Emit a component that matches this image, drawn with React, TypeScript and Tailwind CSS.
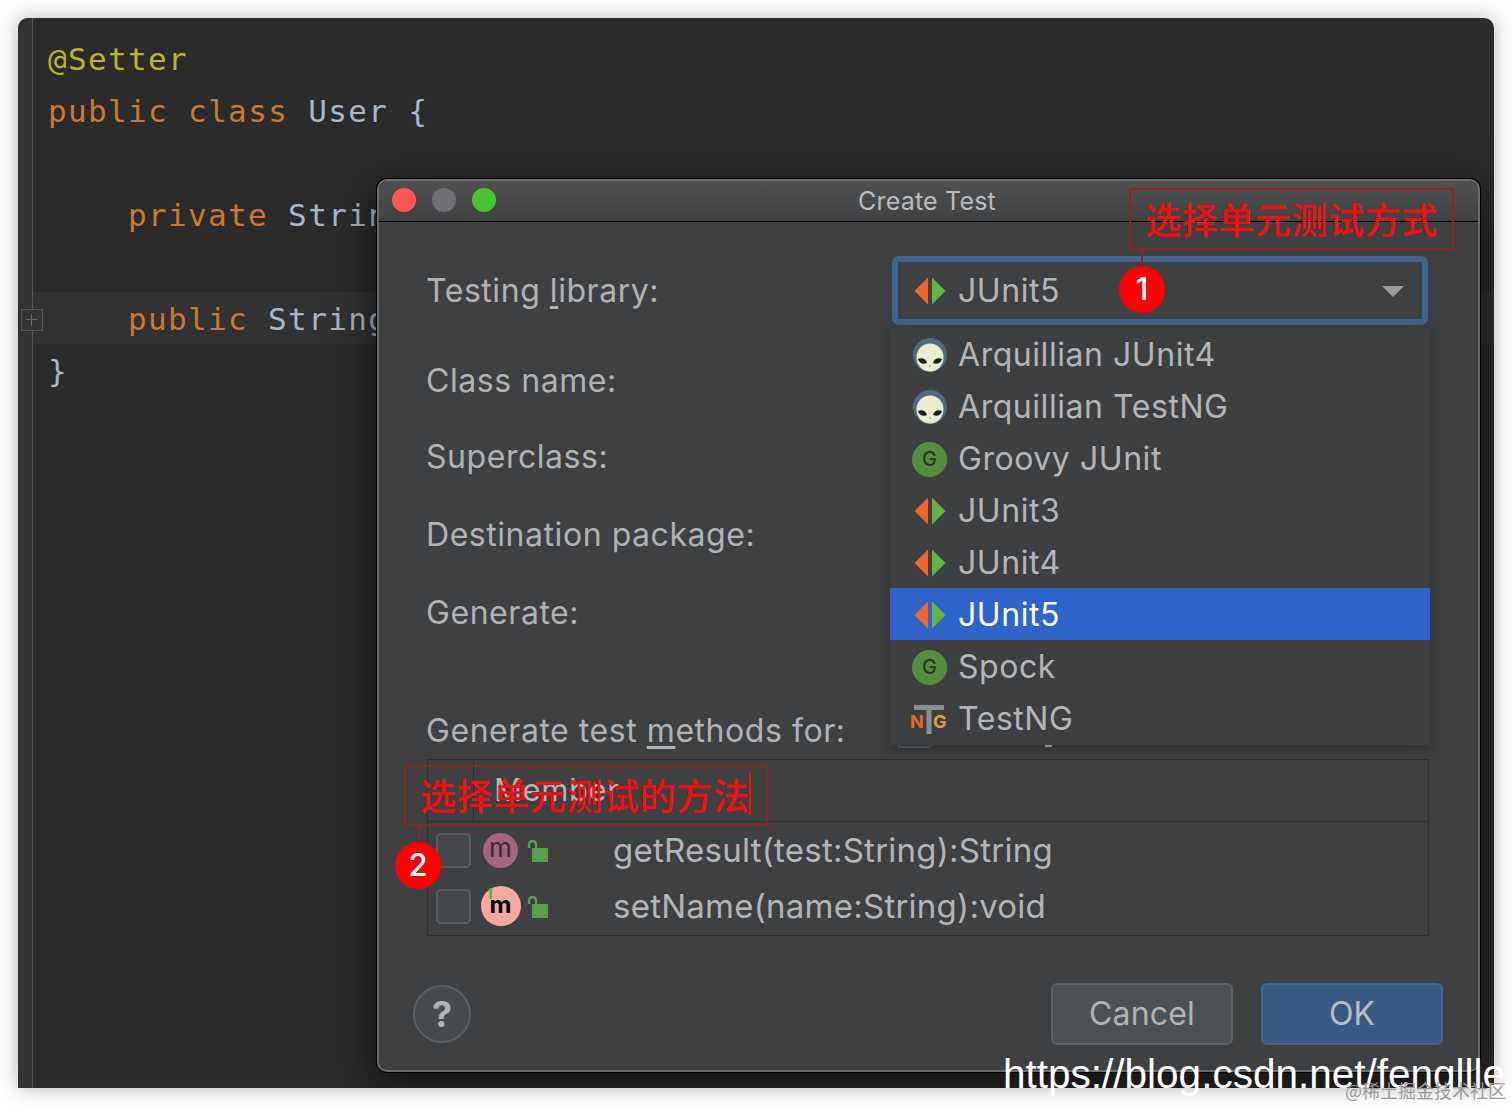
const ui = "font-['Inter','Noto_Sans',sans-serif]";
const cjk = "font-['Noto_Sans_CJK_SC',sans-serif]";

function JUnitIcon() {
  return (
    <svg width="32" height="28" viewBox="0 0 32 28" className="shrink-0">
      <path d="M14 0.5V27.5L0.5 14Z" fill="#ec6727" />
      <path d="M18 0.5V27.5L31.5 14Z" fill="#62b540" />
    </svg>
  );
}

function AlienIcon() {
  return (
    <svg width="34" height="36" viewBox="0 0 34 36" className="shrink-0">
      <circle cx="17" cy="18" r="17" fill="#4f6a7e" />
      <ellipse cx="17" cy="20.5" rx="13.5" ry="14" fill="#e9edd0" />
      <path d="M5 22C9 20 13 22 14 26C10 28 6 26 5 22Z" fill="#1d1f1d" />
      <path d="M29 22C25 20 21 22 20 26C24 28 28 26 29 22Z" fill="#1d1f1d" />
      <circle cx="17" cy="29" r="0.8" fill="#777" />
    </svg>
  );
}

function GroovyIcon() {
  return (
    <div className={`flex h-[35px] w-[35px] shrink-0 items-center justify-center rounded-full bg-[#568c3d] text-[20px] font-medium text-[#1f3d19] ${ui}`}>
      G
    </div>
  );
}

function TestNgIcon() {
  return (
    <svg width="38" height="32" viewBox="0 0 38 32" className="-ml-0.5 shrink-0">
      <text x="0" y="25" fontFamily="Inter, sans-serif" fontWeight="700" fontSize="18" fill="#e8662a">N</text>
      <text x="23" y="25" fontFamily="Inter, sans-serif" fontWeight="700" fontSize="18" fill="#d9a13b">G</text>
      <path d="M4 2H34V7H21.5V31H16.5V7H4Z" fill="#8a9092" />
    </svg>
  );
}

function LockIcon() {
  return (
    <svg width="22" height="24" viewBox="0 0 22 24" className="shrink-0">
      <path d="M2 9V6C2 3.5 3.5 2 5.5 2C7.5 2 9 3.5 9 5.5V9" fill="none" stroke="#59a14a" strokeWidth="2.4" />
      <rect x="5" y="9" width="16" height="14" fill="#59a14a" />
    </svg>
  );
}

const libraries = [
  { name: "Arquillian JUnit4", icon: <AlienIcon /> },
  { name: "Arquillian TestNG", icon: <AlienIcon /> },
  { name: "Groovy JUnit", icon: <GroovyIcon /> },
  { name: "JUnit3", icon: <JUnitIcon /> },
  { name: "JUnit4", icon: <JUnitIcon /> },
  { name: "JUnit5", icon: <JUnitIcon />, active: true },
  { name: "Spock", icon: <GroovyIcon /> },
  { name: "TestNG", icon: <TestNgIcon /> },
];

function LibraryPopup() {
  return (
    <div className="absolute left-[513px] top-[149px] z-10 w-[540px] bg-[#3e3f41] pb-px shadow-[0_4px_14px_rgba(0,0,0,0.3)]">
      {libraries.map((lib) => (
        <div
          key={lib.name}
          className={`flex h-[52px] items-center pt-0.5 ${lib.active ? "bg-[#2f65ca] text-white" : "text-[#b3b5b7]"}`}
        >
          <div className="flex w-[68px] shrink-0 items-center justify-center pl-[11px]">{lib.icon}</div>
          <span className="text-[32px] tracking-[0.55px]">{lib.name}</span>
        </div>
      ))}
    </div>
  );
}

function FormLabel({ children, className }: { children: React.ReactNode; className: string }) {
  return <div className={`flex h-10 items-center text-[32px] tracking-[0.55px] text-[#b0b2b4] ${className}`}>{children}</div>;
}

function MemberRow({ icon, signature }: { icon: React.ReactNode; signature: string }) {
  return (
    <div className="flex h-14 items-center pl-2">
      <div className="h-[35px] w-[35px] shrink-0 rounded-[5px] border-2 border-[#5a5e60] bg-[#43474a]" />
      <div className="flex w-[46px] justify-center pl-[13px]">{icon}</div>
      <div className="ml-2.5 mt-0.5"><LockIcon /></div>
      <span className="ml-[64px] mt-0.5 text-[33px] tracking-[0.25px] text-[#b3b5b7]">{signature}</span>
    </div>
  );
}

function CreateTestDialog() {
  return (
    <div className={`absolute left-[359px] top-[161px] flex h-[893px] w-[1103px] flex-col rounded-[10px] border-2 border-[#6a6c6e] bg-[#3e4042] shadow-[0_0_0_1px_#000,0_14px_50px_rgba(0,0,0,0.65)] ${ui}`}>
      <div className="flex h-[41px] shrink-0 items-center justify-center rounded-t-[9px] border-b border-black bg-gradient-to-b from-[#4f5153] to-[#3f4143] pr-[3px]">
        <div className="absolute left-[13px] top-[7px] flex gap-4">
          <div className="h-6 w-6 rounded-full bg-[#fc5753]" />
          <div className="h-6 w-6 rounded-full bg-[#6f7073]" />
          <div className="h-6 w-6 rounded-full bg-[#48c22e]" />
        </div>
        <span className="pt-0.5 text-[25px] tracking-[0.2px] text-[#b9bbbd]">Create Test</span>
      </div>

      <div className="relative flex flex-1 flex-col pl-[47px]">
        <FormLabel className="mt-[49px]">
          <span>Testing <u className="underline-offset-4">l</u>ibrary:</span>
        </FormLabel>
        <FormLabel className="mt-[50px]">Class name:</FormLabel>
        <FormLabel className="mt-9">Superclass:</FormLabel>
        <FormLabel className="mt-[38px]">Destination package:</FormLabel>
        <FormLabel className="mt-[38px]">Generate:</FormLabel>
        <FormLabel className="mt-[78px]">
          <span>Generate test <u className="underline-offset-4">m</u>ethods for:</span>
        </FormLabel>

        <div className="mr-[49px] ml-px mt-2 h-[177px] border border-[#2e2f30]">
          <div className="flex h-[62px] items-center border-b border-[#2e2f30]">
            <div className="h-full w-[46px] border-r border-[#2e2f30]" />
            <span className="ml-5 text-[31px] tracking-[0.6px] text-[#b3b5b7]">Member</span>
          </div>
          <MemberRow
            signature="getResult(test:String):String"
            icon={
              <div className="flex h-[35px] w-[35px] shrink-0 items-center justify-center rounded-full bg-[#a4667f] pb-1 text-[26px] leading-none text-[#3d2b33]">
                m
              </div>
            }
          />
          <MemberRow
            signature="setName(name:String):void"
            icon={
              <div className="relative flex h-10 w-10 shrink-0 items-center justify-center rounded-full bg-[#f7a9a0] pb-0.5 text-[24px] font-bold leading-none text-black">
                m
                <span className="absolute left-2 top-0 text-[15px] font-bold text-[#4caf3c]">l</span>
              </div>
            }
          />
        </div>

        <div className="mt-[47px] flex items-center justify-between pr-[35px]">
          <div className="ml-[-13px] flex h-[58px] w-[58px] items-center justify-center rounded-full border-2 border-[#5c6062] bg-[#474b4d] text-[36px] font-bold text-[#b0b3b5]">
            ?
          </div>
          <div className="flex gap-7">
            <div className="flex h-[62px] w-[182px] items-center justify-center rounded-[6px] border-2 border-[#5e6264] bg-[#4d5153] text-[32px] tracking-[0.2px] text-[#b0b2b4]">
              Cancel
            </div>
            <div className="flex h-[62px] w-[182px] items-center justify-center rounded-[6px] border-2 border-[#44698f] bg-[#375a82] text-[32px] text-[#b9bec3]">
              OK
            </div>
          </div>
        </div>

        <div className="absolute left-[513px] top-[34px] flex h-[69px] w-[536px] items-center rounded-[7px] border-[6px] border-[#3f6591] bg-[#3e4042] pl-4 pr-[18px]">
          <JUnitIcon />
          <span className="ml-3 text-[32px] tracking-[0.55px] text-[#b3b5b7]">JUnit5</span>
          <div className="ml-auto mt-0.5 h-0 w-0 border-x-[11px] border-t-[11px] border-x-transparent border-t-[#9a9c9e]" />
        </div>

        <div className="absolute left-[518px] top-[522px] h-1 w-[35px] rounded-b-[5px] border-2 border-t-0 border-[#5a5e60]" />
        <div className="absolute left-[666px] top-[522px] h-[3px] w-[7px] bg-[#b0b2b4]" />
      </div>
    </div>
  );
}

function Annotation({ label, number, boxClass, lineClass, badgeClass, cursor }: {
  label: string;
  number: string;
  boxClass: string;
  lineClass: string;
  badgeClass: string;
  cursor?: boolean;
}) {
  return (
    <>
      <div className={`absolute z-20 flex items-center border-2 border-[#8f2326] pb-[3px] pl-[14px] text-[36px] font-medium leading-none text-[#f70d0d] ${cjk} ${boxClass}`}>
        <span className="tracking-[0.6px]">{label}</span>
        {cursor && <div className="h-[42px] w-0.5 bg-[#f70d0d]" />}
      </div>
      <div className={`absolute z-20 w-0.5 bg-[#8f2326] ${lineClass}`} />
      <div className={`absolute z-20 flex h-[47px] w-[46px] items-center justify-center rounded-full bg-[#fe0000] text-[31px] font-medium text-white ${ui} ${badgeClass}`}>
        {number}
      </div>
    </>
  );
}

export default function App() {
  return (
    <div className="relative h-[1106px] w-[1512px] overflow-hidden bg-white">
      <div className="relative ml-[18px] mt-[18px] h-[1070px] w-[1476px] overflow-hidden rounded-t-[10px] bg-[#2b2b2b] shadow-[0_0_20px_rgba(0,0,0,0.3)]">
        <div className="flex h-full">
          <div className="w-[15px] shrink-0 border-r border-[#555] bg-[#313335]" />
          <div className="flex-1 pt-[14px] font-['DejaVu_Sans_Mono',monospace] text-[31px] leading-[54px] tracking-[1.35px] text-[#a9b7c6]">
            <div className="h-[52px] pl-[15px] text-[#bbb529]">@Setter</div>
            <div className="h-[52px] pl-[15px]"><span className="text-[#cc7832]">public class</span> User {"{"}</div>
            <div className="h-[52px]" />
            <div className="h-[52px] pl-[95px]"><span className="text-[#cc7832]">private</span> String</div>
            <div className="h-[52px]" />
            <div className="h-[52px] bg-[#323232] pl-[95px]"><span className="text-[#cc7832]">public</span> String</div>
            <div className="h-[52px] pl-[15px]">{"}"}</div>
          </div>
        </div>
        <div className="absolute left-[3px] top-[291px] flex h-[22px] w-[22px] items-center justify-center border border-[#555] bg-[#313335]">
          <div className="relative h-3 w-3">
            <div className="absolute left-0 top-[5px] h-px w-3 bg-[#666]" />
            <div className="absolute left-[5px] top-0 h-3 w-px bg-[#666]" />
          </div>
        </div>
        <CreateTestDialog />
      </div>

      <div className={`absolute left-[377px] top-[179px] h-0 w-0 ${ui}`}>
        <LibraryPopup />
      </div>

      <Annotation label="选择单元测试方式" number="1" boxClass="left-[1129px] top-[188px] h-[62px] w-[325px]" lineClass="left-[1141px] top-[250px] h-[17px]" badgeClass="left-[1119px] top-[266px]" />
      <Annotation label="选择单元测试的方法" number="2" cursor boxClass="left-[404px] top-[765px] h-[61px] w-[364px]" lineClass="left-[418px] top-[826px] h-5" badgeClass="left-[395px] top-[842px]" />

      <div className="absolute left-[1003px] top-[1050px] z-20 whitespace-nowrap font-['Liberation_Sans',sans-serif] text-[40.5px] leading-[48px] text-white">
        https://blog.csdn.net/fengllle
      </div>
      <div className={`absolute left-[1345px] top-[1078px] z-20 whitespace-nowrap text-[18px] leading-6 text-[#9a9a9a] ${cjk}`}>
        @稀土掘金技术社区
      </div>
    </div>
  );
}
